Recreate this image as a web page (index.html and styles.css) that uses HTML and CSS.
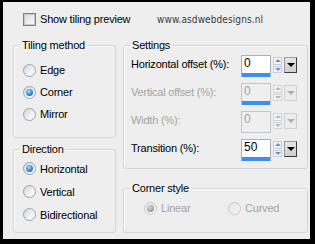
FILE: index.html
```html
<!DOCTYPE html>
<html>
<head>
<meta charset="utf-8">
<link rel="stylesheet" href="styles.css">
</head>
<body>
<div class="frame">
  <div class="top">
    <label class="chk"><span class="checkbox"></span><span>Show tiling preview</span></label>
    <span class="url">www.asdwebdesigns.nl</span>
  </div>
  <div class="main">
    <div class="col-left">
      <fieldset class="group tiling">
        <legend>Tiling method</legend>
        <div class="radios">
          <div class="opt"><span class="radio"></span>Edge</div>
          <div class="opt"><span class="radio on"></span>Corner</div>
          <div class="opt"><span class="radio"></span>Mirror</div>
        </div>
      </fieldset>
      <fieldset class="group direction">
        <legend>Direction</legend>
        <div class="radios">
          <div class="opt"><span class="radio on"></span>Horizontal</div>
          <div class="opt"><span class="radio"></span>Vertical</div>
          <div class="opt"><span class="radio"></span>Bidirectional</div>
        </div>
      </fieldset>
    </div>
    <div class="col-right">
      <fieldset class="group settings">
        <legend>Settings</legend>
        <div class="rows">
          <div class="row">
            <span class="lbl">Horizontal offset (%):</span>
            <div class="spin">
              <div class="field"><span class="val">0</span><span class="bar"></span></div>
              <div class="arrows"><span class="up"></span><span class="dn"></span></div>
              <div class="drop"></div>
            </div>
          </div>
          <div class="row off">
            <span class="lbl">Vertical offset (%):</span>
            <div class="spin">
              <div class="field"><span class="val">0</span><span class="bar"></span></div>
              <div class="arrows"><span class="up"></span><span class="dn"></span></div>
              <div class="drop"></div>
            </div>
          </div>
          <div class="row off">
            <span class="lbl">Width (%):</span>
            <div class="spin">
              <div class="field nobar"><span class="val">0</span></div>
              <div class="arrows"><span class="up"></span><span class="dn"></span></div>
              <div class="drop"></div>
            </div>
          </div>
          <div class="row">
            <span class="lbl">Transition (%):</span>
            <div class="spin">
              <div class="field"><span class="val">50</span><span class="bar"></span></div>
              <div class="arrows"><span class="up"></span><span class="dn"></span></div>
              <div class="drop"></div>
            </div>
          </div>
        </div>
      </fieldset>
      <fieldset class="group corner">
        <legend>Corner style</legend>
        <div class="hradios">
          <div class="opt off"><span class="radio on"></span>Linear</div>
          <div class="opt off"><span class="radio"></span>Curved</div>
        </div>
      </fieldset>
    </div>
  </div>
</div>
</body>
</html>
```
FILE: styles.css
```css
html, body { margin: 0; padding: 0; background: #000; }

.frame {
  width: 315px;
  height: 244px;
  box-sizing: border-box;
  border-style: solid;
  border-color: #000;
  border-width: 2px 5px 5px 3px;
  background: #eeeeee;
  font-family: "Liberation Sans", Arial, sans-serif;
  font-size: 11px;
  letter-spacing: -0.2px;
  color: #000;
}

.top {
  height: 34px;
  display: grid;
  grid-template-columns: 134px auto;
  align-items: center;
  padding-left: 20px;
}

.chk { display: flex; align-items: center; gap: 4px; }

.checkbox {
  width: 13px;
  height: 13px;
  box-sizing: border-box;
  border: 1px solid #7c8389;
  background: linear-gradient(135deg, #d4d6d8 0%, #f4f4f4 70%, #ffffff 100%);
  box-shadow: inset 0 0 0 1px #c3c7cb;
}

.url {
  font-family: "DejaVu Sans", sans-serif;
  font-stretch: condensed;
  font-size: 10px;
  letter-spacing: 0.1px;
  color: #3a3a3a;
}

.main {
  display: flex;
  gap: 7px;
  padding: 2px 0 0 10px;
}

.col-left { width: 103px; display: flex; flex-direction: column; gap: 4px; }
.col-right { width: 185px; display: flex; flex-direction: column; gap: 12px; }

.group {
  margin: 0;
  padding: 0;
  min-width: 0;
  box-sizing: border-box;
  border: 1px solid #d0d6db;
  border-radius: 3px;
  box-shadow: inset 1px 1px 0 #fbfbfb;
}

.group legend {
  padding: 0 2px;
  margin-left: 6px;
  line-height: 14px;
  height: 14px;
}

.tiling { height: 100px; }
.direction { height: 91px; }
.settings { height: 131px; }
.corner { height: 52px; }

.radios { display: flex; flex-direction: column; padding: 7px 0 0 9px; }
.direction .radios { padding-top: 1px; }
.tiling .opt { height: 22px; }
.direction .opt { height: 23px; }

.opt { display: flex; align-items: center; gap: 4px; }

.radio {
  width: 13px;
  height: 13px;
  box-sizing: border-box;
  border-radius: 50%;
  border: 1px solid #9aa3ab;
  background: linear-gradient(135deg, #d2d6da 0%, #eef0f2 55%, #ffffff 100%);
  display: grid;
  place-items: center;
}

.radio.on::after {
  content: "";
  width: 7px;
  height: 7px;
  border-radius: 50%;
  background: radial-gradient(circle at 40% 35%, #a8dcff 0%, #3a8fdc 50%, #1a4f8e 100%);
}

.hradios {
  display: grid;
  grid-template-columns: 84px 84px;
  padding: 3px 0 0 20px;
}
.hradios .opt { height: 20px; }

.opt.off { color: #a3a3a3; }
.opt.off .radio { border-color: #c6c9cc; background: linear-gradient(135deg, #e2e4e6, #f6f6f6); }
.opt.off .radio.on::after { background: radial-gradient(circle at 40% 35%, #d8d8d8 0%, #a4a4a4 60%, #8a8a8a 100%); }

.rows { margin-top: -2px; padding: 0 10px 0 7px; }

.row { display: flex; height: 28px; align-items: flex-start; }
.row .lbl { margin-top: 7px; line-height: 14px; }
.row.off .lbl { color: #a3a3a3; }

.spin { margin-left: auto; display: flex; align-items: flex-start; gap: 2px; }

.field {
  margin-top: 5px;
  width: 30px;
  height: 22px;
  box-sizing: border-box;
  border: 1px solid #a7b0b8;
  border-bottom: none;
  background: #fff;
  display: flex;
  flex-direction: column;
}
.field .val { font-size: 12px; line-height: 15px; padding-left: 2px; letter-spacing: 0; }
.field .bar { margin-top: auto; height: 4px; background: #3c8ff0; }
.field.nobar { border-bottom: 1px solid #c2c6ca; }

.row.off .field { background: #efefef; border-color: #c2c6ca; }
.row.off .field .val { color: #a3a3a3; }

.arrows {
  margin-top: 7px;
  width: 9px;
  height: 16px;
  display: flex;
  flex-direction: column;
  gap: 1px;
}
.arrows span {
  flex: 1;
  box-sizing: border-box;
  border: 1px solid #c5d0dc;
  background: #f2f5f8;
  display: grid;
  place-items: center;
}
.arrows .up::after {
  content: "";
  border-left: 3px solid transparent;
  border-right: 3px solid transparent;
  border-bottom: 3px solid #6f8ed0;
}
.arrows .dn::after {
  content: "";
  border-left: 3px solid transparent;
  border-right: 3px solid transparent;
  border-top: 3px solid #6f8ed0;
}
.row.off .arrows span { border-color: #d2d4d6; }
.row.off .arrows .up::after { border-bottom-color: #b5b8bb; }
.row.off .arrows .dn::after { border-top-color: #b5b8bb; }

.drop {
  margin-top: 7px;
  width: 13px;
  height: 16px;
  box-sizing: border-box;
  border: 1px solid #3c3c3c;
  border-top-color: #9a9a9a;
  border-left-color: #9a9a9a;
  background: linear-gradient(#e6e6e6, #cfcfcf);
  display: grid;
  place-items: center;
}
.drop::after {
  content: "";
  border-left: 4px solid transparent;
  border-right: 4px solid transparent;
  border-top: 4px solid #000;
}
.row.off .drop { border-color: #d0d0d0; background: #ececec; }
.row.off .drop::after { border-top-color: #b0b0b0; }
```
